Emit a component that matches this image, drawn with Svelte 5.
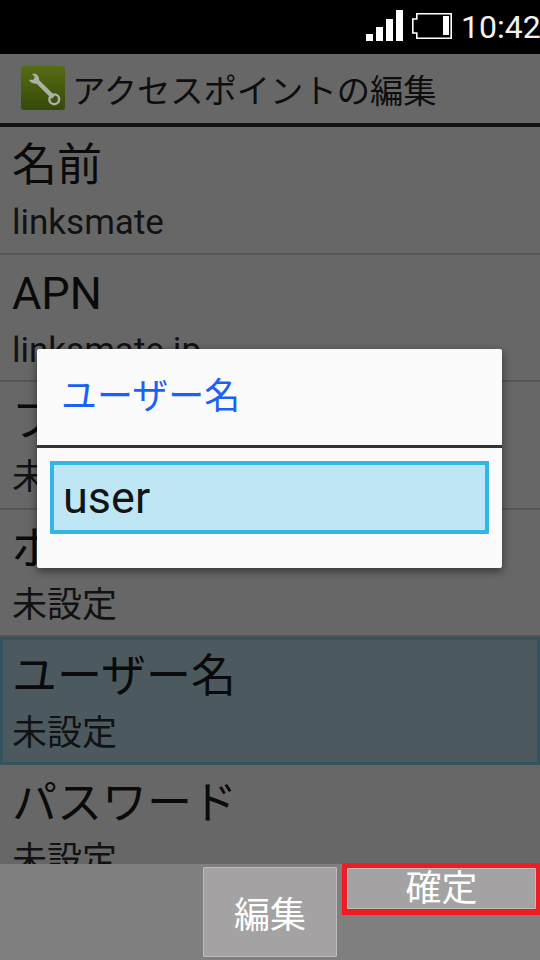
<script>
  const rows = [
    { name: '名前', value: 'linksmate' },
    { name: 'APN', value: 'linksmate.jp' },
    { name: 'プロキシ', value: '未設定' },
    { name: 'ポート', value: '未設定' },
    { name: 'ユーザー名', value: '未設定', selected: true },
    { name: 'パスワード', value: '未設定' }
  ];
</script>

<div class="screen">
  <div class="status">
    <svg class="signal" width="38" height="32" viewBox="0 0 38 32">
      <rect x="0" y="24" width="7" height="7" fill="#fff" />
      <rect x="10" y="17" width="7" height="14" fill="#fff" />
      <rect x="20" y="9" width="7" height="22" fill="#fff" />
      <rect x="30" y="0" width="7" height="31" fill="#fff" />
    </svg>
    <svg class="battery" width="40" height="26" viewBox="0 0 40 26">
      <path d="M4.800 .8H39.200V25.200H4.800V20H.8V6H4.800Z" fill="none" stroke="#fff" stroke-width="1.600" />
      <rect x="31" y="3" width="6" height="19" fill="#fff" />
    </svg>
    <span class="clock">10:42</span>
  </div>

  <div class="titlebar">
    <svg class="appicon" width="45" height="45" viewBox="0 0 46 46">
      <defs>
        <linearGradient id="tile" x1="0" y1="0" x2="0" y2="1">
          <stop offset="0" stop-color="#566c14" />
          <stop offset="1" stop-color="#364a08" />
        </linearGradient>
      </defs>
      <rect width="45" height="45" rx="3" fill="url(#tile)" />
      <path d="M14 13L33 32" stroke="#aeb0a8" stroke-width="4.500" />
      <path d="M8 14A7 7 0 0 0 18 17A7 7 0 0 0 15 8L11 8L14 11L13 14L10 14Z" fill="#aeb0a8" />
      <circle cx="34" cy="34" r="5" fill="none" stroke="#aeb0a8" stroke-width="2.500" />
    </svg>
    <span class="title">アクセスポイントの編集</span>
  </div>

  <div class="list">
    {#each rows as row}
      <div class="row" class:selected={row.selected}>
        <div class="name">{row.name}</div>
        <div class="value">{row.value}</div>
      </div>
    {/each}
  </div>

  <div class="bottom">
    <button class="btn edit">編集</button>
    <div class="confirm-wrap">
      <button class="btn confirm">確定</button>
    </div>
  </div>

  <div class="dialog">
    <div class="dialog-title">ユーザー名</div>
    <div class="dialog-body">
      <div class="input">user</div>
    </div>
  </div>
</div>

<style>
  :global(body) {
    margin: 0;
    background: #000;
  }

  .screen {
    position: relative;
    width: 540px;
    height: 960px;
    display: flex;
    flex-direction: column;
    overflow: hidden;
    background: #676767;
    font-family: Roboto, "Noto Sans CJK JP", sans-serif;
    color: #0a0a0a;
  }

  .status {
    height: 54px;
    flex: none;
    background: #000;
    display: flex;
    align-items: center;
    justify-content: flex-end;
  }

  .signal {
    margin-right: 8px;
    margin-bottom: 3px;
  }

  .battery {
    margin-right: 9px;
    margin-bottom: 3px;
  }

  .clock {
    color: #f2f2f2;
    font-size: 32px;
    line-height: 54px;
    width: 79px;
    white-space: nowrap;
  }

  .titlebar {
    height: 73px;
    flex: none;
    box-sizing: border-box;
    border-bottom: 4px solid #111;
    display: flex;
    align-items: center;
    padding-left: 21px;
    gap: 6px;
  }

  .appicon {
    flex: none;
  }

  .title {
    font-size: 33.300px;
    white-space: nowrap;
    color: #0e0e0e;
  }

  .list {
    flex: 1;
    min-height: 0;
    overflow: hidden;
  }

  .row {
    height: 127.500px;
    box-sizing: border-box;
    border-bottom: 2px solid #555;
    padding: 13px 0 0 12px;
  }

  .row.selected {
    background: #4c5a60;
    border: 3px solid #35525f;
    padding: 11px 0 0 9px;
  }

  .name {
    font-size: 45px;
    line-height: 52px;
    white-space: nowrap;
  }

  .value {
    font-size: 35px;
    line-height: 50px;
    margin-top: 6px;
    white-space: nowrap;
    color: #121212;
  }

  .bottom {
    height: 96px;
    flex: none;
    background: #7f7f7f;
    display: flex;
    justify-content: flex-end;
    align-items: flex-start;
  }

  .btn {
    background: #a4a2a3;
    border: 1px solid #bdbcbc;
    border-radius: 1px;
    color: #fff;
    font-family: inherit;
    padding: 0;
  }

  .edit {
    width: 134px;
    height: 90px;
    margin: 3px 5px 0 0;
    font-size: 36px;
  }

  .confirm-wrap {
    width: 198px;
    height: 52px;
    margin-top: -1px;
    box-sizing: border-box;
    border: 4px solid #ee1c25;
    border-width: 5px 4px 6px 5px;
  }

  .confirm {
    display: block;
    width: 100%;
    height: 100%;
    font-size: 36px;
    line-height: 34px;
  }

  .dialog {
    position: absolute;
    left: 37px;
    top: 349px;
    width: 465px;
    height: 219px;
    background: #fbfbfb;
    border-radius: 2px;
    box-shadow: 0 3px 8px rgba(0, 0, 0, 0.5);
  }

  .dialog-title {
    height: 99px;
    box-sizing: border-box;
    border-bottom: 3px solid #333;
    padding-left: 24px;
    font-size: 36px;
    line-height: 96px;
    color: #1a62f5;
    white-space: nowrap;
  }

  .dialog-body {
    padding: 13px 13px 0;
  }

  .input {
    height: 73px;
    box-sizing: border-box;
    border: 4px solid #33b5e5;
    background: #bee6f5;
    padding-left: 9px;
    font-size: 45px;
    line-height: 65px;
    color: #141414;
  }
</style>
